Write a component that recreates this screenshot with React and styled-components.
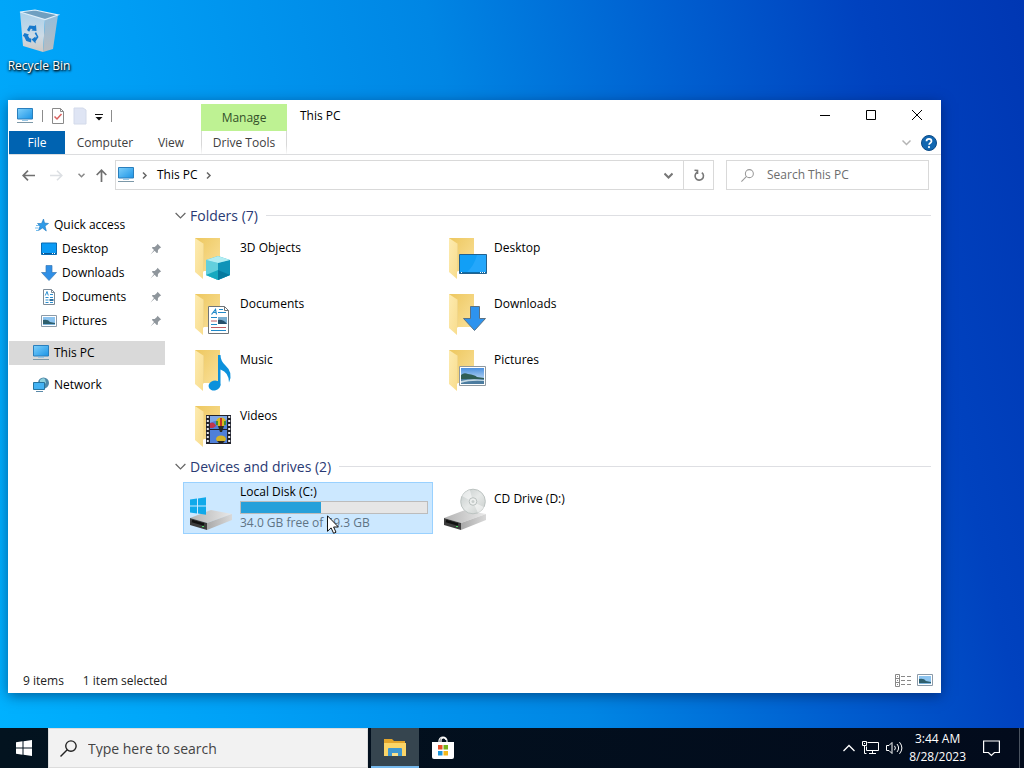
import styled, { createGlobalStyle } from "styled-components";

const folders = [
	{ name: "3D Objects", art: "cube" },
	{ name: "Desktop", art: "desktop" },
	{ name: "Documents", art: "document" },
	{ name: "Downloads", art: "download" },
	{ name: "Music", art: "music" },
	{ name: "Pictures", art: "picture" },
	{ name: "Videos", art: "video" },
];

const pinned = [
	{ name: "Desktop", Icon: DesktopIcon },
	{ name: "Downloads", Icon: DownloadIcon },
	{ name: "Documents", Icon: DocumentIcon },
	{ name: "Pictures", Icon: PictureIcon },
];

export default function App() {
	return (
		<Screen>
			<GlobalStyle />
			<Desktop>
				<Shortcut>
					<RecycleBinIcon />
					Recycle Bin
				</Shortcut>
				<Explorer />
			</Desktop>
			<Taskbar />
		</Screen>
	);
}

function Explorer() {
	return (
		<Window>
			<TitleBar>
				<QuickTools>
					<PcIcon />
					<Separator />
					<ToolButton aria-label="Properties">
						<svg width="14" height="18" viewBox="0 0 14 18">
							<path d="M1.500 1.500h8l3 3v12h-11z" fill="#fff" stroke="#8a8a8a" />
							<path d="M9.500 1.500v3h3" fill="none" stroke="#8a8a8a" />
							<path d="M3.500 9.500l2.500 2.500l4.500-5" fill="none" stroke="#d9605e" strokeWidth="1.500" />
						</svg>
					</ToolButton>
					<ToolButton aria-label="New folder">
						<svg width="14" height="18" viewBox="0 0 14 18">
							<path d="M1 1h9l3 2v14h-12z" fill="#dfe5f4" stroke="#d3daea" />
						</svg>
					</ToolButton>
					<ToolButton aria-label="Customize toolbar">
						<svg width="8" height="10" viewBox="0 0 8 10">
							<path d="M0 3.500h8" stroke="#111" />
							<path d="M.5 6h7l-3.500 3.500z" fill="#111" />
						</svg>
					</ToolButton>
					<Separator />
				</QuickTools>
				<ContextTab>Manage</ContextTab>
				<WindowTitle>This PC</WindowTitle>
				<CaptionButton aria-label="Minimize">
					<svg width="10" height="10" stroke="#000">
						<path d="M0 5.500h10" />
					</svg>
				</CaptionButton>
				<CaptionButton aria-label="Maximize">
					<svg width="10" height="10" stroke="#000" fill="none">
						<path d="M.5 .5h9v9h-9z" />
					</svg>
				</CaptionButton>
				<CaptionButton aria-label="Close">
					<svg width="10" height="10" stroke="#000">
						<path d="M0 0l10 10M10 0l-10 10" />
					</svg>
				</CaptionButton>
			</TitleBar>
			<Ribbon>
				<FileTab>File</FileTab>
				<RibbonTab $width="80px">Computer</RibbonTab>
				<RibbonTab $width="52px">View</RibbonTab>
				<DriveTab $width="86px">Drive Tools</DriveTab>
				<RibbonEnd>
					<IconButton aria-label="Expand ribbon">
						<Chevron dir="down" color="#b4b4b4" />
					</IconButton>
					<IconButton aria-label="Help">
						<svg width="16" height="16" viewBox="0 0 16 16">
							<circle cx="8" cy="8" r="7.500" fill="#1167b1" stroke="#0b4a86" />
							<path d="M5.500 6.200c0-3.200 5-3.200 5 0c0 1.800-2.400 1.700-2.400 3.600" fill="none" stroke="#fff" strokeWidth="1.700" />
							<circle cx="8" cy="12.100" r="1.100" fill="#fff" />
						</svg>
					</IconButton>
				</RibbonEnd>
			</Ribbon>
			<NavBar>
				<NavButtons>
					<IconButton aria-label="Back">
						<svg width="13" height="11" fill="none" stroke="#707070" strokeWidth="1.700">
							<path d="M13 5.500h-12M6 .7l-4.800 4.800l4.800 4.800" />
						</svg>
					</IconButton>
					<IconButton aria-label="Forward">
						<svg width="13" height="11" fill="none" stroke="#dcdfe3" strokeWidth="1.600">
							<path d="M0 5.500h12M7 .7l4.800 4.800l-4.800 4.800" />
						</svg>
					</IconButton>
					<RecentButton aria-label="Recent locations">
						<svg width="7" height="5" fill="none" stroke="#888" strokeWidth="1.500">
							<path d="M.5 .7l3 3l3-3" />
						</svg>
					</RecentButton>
					<IconButton aria-label="Up">
						<svg width="11" height="13" fill="none" stroke="#707070" strokeWidth="1.700">
							<path d="M5.500 13v-12M.7 6l4.800-4.800l4.800 4.800" />
						</svg>
					</IconButton>
				</NavButtons>
				<AddressBar>
					<Crumbs>
						<PcIcon />
						<Chevron dir="right" color="#666" />
						<a href="#this-pc">This PC</a>
						<Chevron dir="right" color="#666" />
					</Crumbs>
					<AddressButton aria-label="Previous locations">
						<Chevron dir="down" color="#777" bold />
					</AddressButton>
					<RefreshButton aria-label="Refresh">
						<svg width="12" height="13" viewBox="0 0 12 13" fill="none" stroke="#777" strokeWidth="1.600">
							<path d="M8.800 3.600a4.200 4.200 0 1 1-4.600-.3" />
							<path d="M1.500 1.200l3 .3v3.600" />
						</svg>
					</RefreshButton>
				</AddressBar>
				<SearchBox>
					<SearchIcon size={13} color="#999" />
					<input type="text" placeholder="Search This PC" aria-label="Search This PC" />
				</SearchBox>
			</NavBar>
			<Body>
				<Sidebar>
					<TreeItem href="#quick-access">
						<StarIcon />
						Quick access
					</TreeItem>
					{pinned.map(({ name, Icon }) => (
						<TreeItem key={name} href={"#" + name} $nested>
							<Icon />
							<span>{name}</span>
							<PinIcon />
						</TreeItem>
					))}
					<TreeItem href="#this-pc" $root $selected>
						<PcIcon />
						This PC
					</TreeItem>
					<TreeItem href="#network" $root>
						<NetworkIcon />
						Network
					</TreeItem>
				</Sidebar>
				<Content>
					<GroupHeader>
						<Chevron dir="down" color="#666" wide />
						Folders (7)
					</GroupHeader>
					<Tiles>
						{folders.map((f) => (
							<Tile key={f.name}>
								<FolderIcon art={f.art} />
								<TileText>{f.name}</TileText>
							</Tile>
						))}
					</Tiles>
					<GroupHeader>
						<Chevron dir="down" color="#666" wide />
						Devices and drives (2)
					</GroupHeader>
					<Tiles>
						<Tile $selected>
							<DriveIcon windows />
							<DriveText>
								<span>Local Disk (C:)</span>
								<Meter>
									<MeterFill style={{ width: "43%" }} />
								</Meter>
								<FreeSpace>34.0 GB free of 59.3 GB</FreeSpace>
							</DriveText>
							<Pointer width="12" height="19" viewBox="0 0 12 19">
								<path d="M.5 .8v15.500l3.600-3.400l2.500 5.400l2.400-1.100l-2.400-5.200h4.800z" fill="#fff" stroke="#111" />
							</Pointer>
						</Tile>
						<Tile>
							<DriveIcon />
							<TileText>CD Drive (D:)</TileText>
						</Tile>
					</Tiles>
				</Content>
			</Body>
			<StatusBar>
				<span>9 items</span>
				<span>1 item selected</span>
				<ViewButtons>
					<IconButton aria-label="Details view">
						<svg width="16" height="13" fill="none" stroke="#888">
							<path d="M.5 .5h4v12h-4zM.5 4.500h4M.5 8.500h4" />
							<path d="M2 2.500h1M2 6.500h1M2 10.500h1M6 2.500h4M12 2.500h4M6 6.500h4M12 6.500h4M6 10.500h4M12 10.500h4" />
						</svg>
					</IconButton>
					<IconButton aria-label="Large icons view">
						<PictureIcon />
					</IconButton>
				</ViewButtons>
			</StatusBar>
		</Window>
	);
}

function Taskbar() {
	return (
		<Bar>
			<TaskButton aria-label="Start">
				<svg width="16" height="16" viewBox="0 0 16 16" fill="#fff">
					<path d="M0 2.200l6.500-.9v6.200h-6.500zM7.500 1.200l8.500-1.200v7.500h-8.500zM0 8.500h6.500v6.200l-6.500-.9zM7.500 8.500h8.500v7.500l-8.500-1.200z" />
				</svg>
			</TaskButton>
			<TaskSearch>
				<SearchIcon size={17} color="#222" />
				<input type="text" placeholder="Type here to search" aria-label="Type here to search" />
			</TaskSearch>
			<TaskButton $active aria-label="File Explorer">
				<svg width="24" height="20" viewBox="0 0 24 20">
					<path d="M1 1h8l2 2h11v15h-21z" fill="#e3a52b" />
					<path d="M1 5h22v13h-22z" fill="#fbd567" />
					<path d="M5 18v-7q0-1 1-1h12q1 0 1 1v7h-4v-3h-6v3z" fill="#3f97cf" />
					<path d="M9 15h6v3h-6z" fill="#fbe08a" />
				</svg>
			</TaskButton>
			<TaskButton aria-label="Microsoft Store">
				<svg width="24" height="24" viewBox="0 0 24 24">
					<path d="M8 7v-2a4 4 0 0 1 8 0v2M10 7v-2a2 2 0 0 1 5-1" fill="none" stroke="#fff" strokeWidth="1.200" />
					<path d="M1 6h22v15q0 2-2 2h-18q-2 0-2-2z" fill="#fff" />
					<path d="M7 9h4.500v4.500h-4.500z" fill="#e6502a" />
					<path d="M12.500 9h4.500v4.500h-4.500z" fill="#79b31c" />
					<path d="M7 15h4.500v4.500h-4.500z" fill="#1c96dc" />
					<path d="M12.500 15h4.500v4.500h-4.500z" fill="#f3b71b" />
				</svg>
			</TaskButton>
			<Tray>
				<TrayIcons>
					<IconButton aria-label="Show hidden icons">
						<svg width="12" height="8" fill="none" stroke="#fff" strokeWidth="1.300">
							<path d="M.5 7l5.500-5.500l5.500 5.500" />
						</svg>
					</IconButton>
					<IconButton aria-label="Network status">
						<svg width="17" height="14" viewBox="0 0 17 14" fill="none" stroke="#fff">
							<path d="M5.500 1.500h11v8h-12v-4M10.500 9.500v3M7 12.500h7M.5 .5h4v4h-4zM2.500 4.500v8h2M2 2.500h1" />
						</svg>
					</IconButton>
					<IconButton aria-label="Volume">
						<svg width="18" height="14" viewBox="0 0 18 14" fill="none" stroke="#fff">
							<path d="M.5 4.500h2.500l3-3v11l-3-3h-2.500z" />
							<path d="M8.500 4.800q1.800 2.200 0 4.400M11 3q3.200 4 0 8M13.500 1.200q4.800 5.800 0 11.600" />
						</svg>
					</IconButton>
				</TrayIcons>
				<Clock>
					<span>3:44 AM</span>
					<span>8/28/2023</span>
				</Clock>
				<IconButton aria-label="Notifications">
					<svg width="17" height="17" viewBox="0 0 17 17" fill="none" stroke="#fff" strokeWidth="1.200">
						<path d="M.6 1h15.800v11.500h-5l-3 3l-3-3h-4.800z" />
					</svg>
				</IconButton>
				<ShowDesktop aria-label="Show desktop" />
			</Tray>
		</Bar>
	);
}

function Chevron({ dir, color, bold, wide }) {
	const size = wide ? 11 : 9;
	return (
		<svg width={size} height={size} viewBox="0 0 9 9" fill="none" stroke={color} strokeWidth={bold ? 2 : wide ? 1 : 1.5}>
			<path d={dir === "down" ? "M.5 2.500l4 4l4-4" : "M3 1.500l3 3l-3 3"} />
		</svg>
	);
}

function SearchIcon({ size, color }) {
	return (
		<svg width={size} height={size} viewBox="0 0 16 16" fill="none" stroke={color} strokeWidth="1.300">
			<circle cx="10.300" cy="5.700" r="4.900" />
			<path d="M6.800 9.200l-6.300 6.300" />
		</svg>
	);
}

function PcIcon() {
	return (
		<svg width="18" height="16" viewBox="0 0 18 16">
			<defs>
				<linearGradient id="pc" x1="0" y1="0" x2="1" y2="1">
					<stop offset="0" stopColor="#7fd0fb" />
					<stop offset="1" stopColor="#1b94e6" />
				</linearGradient>
			</defs>
			<path d="M1.500 .5h15v10.500h-15z" fill="url(#pc)" stroke="#2a7fbd" />
			<path d="M6 12.500h6" stroke="#9ac8e6" />
			<path d="M1 14.500h16" stroke="#7c98a8" />
		</svg>
	);
}

function StarIcon() {
	return (
		<svg width="16" height="16" viewBox="0 0 16 16">
			<path d="M9.500 2l1 4l4 .5l-3.500 2.500l1.300 5l-3.800-3l-4 2.500l1.500-4.500l-2.500-2.500h4z" fill="#2f9be8" stroke="#1b77bf" strokeWidth=".6" />
			<path d="M2 8.500h3M1 11h3.500M2 13.500h2" stroke="#73bdee" />
		</svg>
	);
}

function DesktopIcon() {
	return (
		<svg width="16" height="14" viewBox="0 0 16 14">
			<path d="M.5 1h15v11.500h-15z" fill="#0b9bf5" stroke="#0b6cb3" />
			<path d="M1 11.500h14" stroke="#0b5a98" />
			<path d="M2 11.500h1M11 11.500h1M13 11.500h1" stroke="#fff" />
		</svg>
	);
}

function DownloadIcon() {
	return (
		<svg width="16" height="16" viewBox="0 0 16 16">
			<path d="M5 .5h6v7h4.500l-7.500 8l-7.500-8h4.500z" fill="#2f8fe6" stroke="#3a78b4" strokeWidth=".7" />
		</svg>
	);
}

function DocumentIcon() {
	return (
		<svg width="16" height="16" viewBox="0 0 16 16">
			<path d="M2.500 .5h8l3 3v12h-11z" fill="#fff" stroke="#7d8a96" />
			<path d="M10.500 .5v3h3" fill="none" stroke="#7d8a96" />
			<path d="M4.300 6.500l1.700-4l1.300 4M9 5.500h3M4.500 8.500h3M9 8.500h3M4.500 11h3M4.500 13.500h3M9 13.500h3" fill="none" stroke="#2b8fd0" />
			<path d="M8.500 10h4v2h-4z" fill="#2d6f9e" />
		</svg>
	);
}

function PictureIcon() {
	return (
		<svg width="16" height="14" viewBox="0 0 16 14">
			<path d="M.5 1.500h15v11h-15z" fill="#fff" stroke="#8b9aa8" />
			<path d="M2 3h12v8h-12z" fill="#8cc4f0" />
			<path d="M2 6q5-1 7 2l5 1v2h-12z" fill="#2e5f6d" />
			<path d="M2 10h12v1h-12z" fill="#7db4dc" />
		</svg>
	);
}

function PinIcon() {
	return (
		<svg width="12" height="12" viewBox="0 0 12 12" fill="#8f969c">
			<path d="M7.500 .8l3.700 3.700l-1.200 .4l-2 2.200l-.2 2.600l-1.100 .2l-2.100-2.200l-4.100 3.700l3.500-4.300l-2-2l.4-1l2.300-.2l2.200-2z" />
		</svg>
	);
}

function NetworkIcon() {
	return (
		<svg width="18" height="16" viewBox="0 0 18 16">
			<circle cx="11.500" cy="6" r="5.500" fill="#4f88a8" />
			<path d="M8 3q3-3 5-1l1 4l-3 2l-3-2z" fill="#8ed0dc" />
			<path d="M1.500 5.500h11v7h-11z" fill="#43b2f3" stroke="#26749f" />
			<path d="M4 14.500h7" stroke="#5a89a8" />
		</svg>
	);
}

function RecycleBinIcon() {
	return (
		<svg width="48" height="48" viewBox="0 0 48 48">
			<defs>
				<linearGradient id="bin" x1="0" y1="0" x2="0" y2="1">
					<stop offset="0" stopColor="#a9d0ea" />
					<stop offset=".6" stopColor="#cddbe6" />
					<stop offset="1" stopColor="#cfc9c4" />
				</linearGradient>
				<linearGradient id="binSide" x1="0" y1="0" x2="0" y2="1">
					<stop offset="0" stopColor="#93bddb" />
					<stop offset="1" stopColor="#b9bcc0" />
				</linearGradient>
			</defs>
			<path d="M5 4l25 7l-2 33l-20-6z" fill="url(#bin)" />
			<path d="M30 11l13-4l-5 34l-10 3z" fill="url(#binSide)" />
			<path d="M5 4l15-2l23 5l-13 4.500z" fill="#6f9fc0" stroke="#dfeef8" strokeWidth="1.200" />
			<g fill="#1779cc">
				<path d="M12 22l2.500-4.500l5 .5l1.500-1l.5 6l-5-.5l1.200-1.500l-2-.2l-1.500 3z" />
				<path d="M21 24l2.500 5l-3 4.500l.2 2l-4.200-4l4-3l.2 1.700l1-1.700l-2-3z" />
				<path d="M9.500 25l4.500 1.500l-1 1.200l1.500 2.500l1.800 .4l-.2 4l-4.800-1.600l-2.200-4.500l-1.400-.5z" />
			</g>
		</svg>
	);
}

function FolderIcon({ art }) {
	return (
		<svg width="48" height="48" viewBox="0 0 48 48">
			<defs>
				<linearGradient id="back" x1="0" y1="0" x2="1" y2="1">
					<stop offset="0" stopColor="#edc75f" />
					<stop offset="1" stopColor="#fae19a" />
				</linearGradient>
				<linearGradient id="flap" x1="0" y1="0" x2="1" y2="1">
					<stop offset="0" stopColor="#fdebb0" />
					<stop offset="1" stopColor="#f8dc8c" />
				</linearGradient>
				<linearGradient id="sky" x1="0" y1="0" x2="0" y2="1">
					<stop offset="0" stopColor="#4b90df" />
					<stop offset="1" stopColor="#e2f1fb" />
				</linearGradient>
			</defs>
			<path d="M6 5h25v33h-25z" fill="url(#back)" />
			<path d="M6 5l9 6v27l-1 1v7l-8-7z" fill="url(#flap)" />
			<path d="M14.500 11v27" stroke="#efd489" strokeWidth=".8" />
			{folderArt[art]}
		</svg>
	);
}

const folderArt = {
	cube: (
		<>
			<path d="M17 27l12-4l12 4v15l-12 5l-12-5z" fill="#35b5cf" />
			<path d="M17 27l12 3v17l-12-5z" fill="#62cfdd" />
			<path d="M17 42l12-5v10z" fill="#16a9c0" />
			<path d="M29 30l12-3v15l-12 5z" fill="#0f93b8" />
			<path d="M29 37l12 5l-12 5z" fill="#057a9f" />
			<path d="M17 27l12-4l12 4l-12 3z" fill="#b2edf2" />
		</>
	),
	desktop: (
		<>
			<path d="M16.500 21.500h27v19h-27z" fill="#119ff6" stroke="#23618d" />
			<path d="M24 39q7-6 10-17h9v17z" fill="#24a7fb" />
			<path d="M17 39.500h26" stroke="#0c6ca8" />
			<path d="M18 39.500h1M37 39.500h1M39 39.500h1M41 39.500h1" stroke="#fff" />
		</>
	),
	document: (
		<>
			<path d="M19.500 17.500h16l4 4v23h-20z" fill="#fff" stroke="#6e7479" />
			<path d="M35.500 17.500v4h4" fill="none" stroke="#6e7479" />
			<path d="M22.500 25.500l4-5l1 5M24 23.500h3M30 20.500h4M29 23.500h8M22 28.500h6M22 35.500h6M22 41.500h15" fill="none" stroke="#2089c9" strokeWidth="1.200" />
			<path d="M22 32h6M22 38.500h15" stroke="#c15b62" />
			<path d="M29 28h9v7h-9z" fill="#79aed1" />
			<path d="M29 31q5-1 9 4h-9z" fill="#28506a" />
		</>
	),
	download: <path d="M27.500 17.500h9v12h6l-11 12l-11-12h7z" fill="#2e93ee" stroke="#5a7183" />,
	music: (
		<>
			<ellipse cx="25.500" cy="40.500" rx="6" ry="4.800" transform="rotate(-15 25.500 40.500)" fill="#0c91dc" />
			<path d="M29 10h2.500q0 6 5 10.500q8 7 3.500 17q0-10-8.500-13v16h-2.500z" fill="#0c91dc" />
		</>
	),
	picture: (
		<>
			<path d="M16.500 21.500h26v19h-26z" fill="#fff" stroke="#8e989f" />
			<path d="M18 23h23v16h-23z" fill="url(#sky)" />
			<path d="M18 30q3-3 7-1q7 1 9 3l7 1v2h-23z" fill="#2f5d55" />
			<path d="M18 34h23v5h-23z" fill="#4c7c9f" />
			<path d="M18 36q10-3 23-1v1q-14-1-23 2z" fill="#c5d9e4" />
		</>
	),
	video: (
		<>
			<path d="M17 14h25v29h-25z" fill="#20222c" />
			<path d="M18.800 15v27M40.200 15v27" stroke="#e8eaf0" strokeWidth="2" strokeDasharray="2 2" />
			<path d="M21 15h17v13h-17zM21 29h17v13h-17z" fill="#4f7fd8" />
			<path d="M21 15h17v4q-7-2-17 3z" fill="#7fa8e8" />
			<ellipse cx="32" cy="21" rx="5" ry="4.500" fill="#d9b91e" />
			<path d="M31 17h2v8h-2z" fill="#c73227" />
			<path d="M27 20h2v4h-2zM35 20h2v4h-2z" fill="#3f8f3a" />
			<path d="M29 25h6l-2 6h-2z" fill="#2d2b21" />
			<path d="M21 22q4-2 6 3l-3 2h-3z" fill="#c2354c" />
			<ellipse cx="32" cy="38" rx="5" ry="3.500" fill="#d4b32a" />
			<path d="M28 40h8l-2 2h-4z" fill="#24231f" />
			<path d="M21 28.500h17" stroke="#20222c" />
		</>
	),
};

function DriveIcon({ windows }) {
	return (
		<svg width="48" height="48" viewBox="0 0 48 48">
			<defs>
				<linearGradient id="lid" x1="0" y1="0" x2="1" y2="0">
					<stop offset="0" stopColor="#b3b3b3" />
					<stop offset="1" stopColor="#e9e9e9" />
				</linearGradient>
				<linearGradient id="side" x1="0" y1="0" x2="1" y2="0">
					<stop offset="0" stopColor="#a9a9a9" />
					<stop offset="1" stopColor="#d9d9d9" />
				</linearGradient>
				<linearGradient id="disc" x1="0" y1="0" x2="1" y2="1">
					<stop offset="0" stopColor="#c2c9c8" />
					<stop offset=".5" stopColor="#e6e9e8" />
					<stop offset="1" stopColor="#c6cbc9" />
				</linearGradient>
			</defs>
			<path d="M1 34l21-8l21 4l-25 9z" fill="url(#lid)" />
			<path d="M1 34l17 5v7l-17-5z" fill="#3d3d3d" />
			<path d="M18 39l25-9v6l-25 10z" fill="url(#side)" />
			<path d="M3 37l12 3.500" stroke="#111" strokeWidth="2.500" />
			<path d="M13 42.500h2" stroke="#4fdb63" strokeWidth="1.200" />
			{windows ? (
				<path d="M1 15.500l7-1v7h-7zM9 14.400l8-1.200v8.300h-8zM1 22.500h7v7l-7-1zM9 22.500h8v8.300l-8-1.200z" fill="#10a9ea" />
			) : (
				<>
					<circle cx="30" cy="17.500" r="12.300" fill="url(#disc)" stroke="#bcc3c1" />
					<path d="M30 18l-11-6q3-5 8-6zM30 18l11 5q-2 4-6 6z" fill="#fff" opacity=".5" />
					<circle cx="30" cy="17.500" r="3.800" fill="#eef0ef" stroke="#b9c0be" />
					<circle cx="30" cy="17.500" r="1.500" fill="#c8cecc" />
				</>
			)}
		</svg>
	);
}

const GlobalStyle = createGlobalStyle`
	* {
		box-sizing: border-box;
	}
	body {
		margin: 0;
		font-family: "Open Sans", "Noto Sans", sans-serif;
		font-size: 12px;
		line-height: 16px;
		color: #000;
	}
	button, input {
		font: inherit;
		color: inherit;
		padding: 0;
		border: none;
		background: none;
	}
	a {
		color: inherit;
		text-decoration: none;
	}
	svg {
		display: block;
		flex-shrink: 0;
	}
`;

const Screen = styled.div`
	min-height: 100vh;
	display: flex;
	flex-direction: column;
	background: linear-gradient(77deg, #00b2ff 0%, #00a0f6 22%, #0086e4 50%, #005fd0 70%, #0042bf 86%, #0037b3 100%);
`;

const Desktop = styled.main`
	flex: 1;
	display: flex;
	flex-direction: column;
	align-items: flex-start;
	padding: 8px 83px 35px 8px;
`;

const Shortcut = styled.button`
	width: 62px;
	height: 92px;
	display: flex;
	flex-direction: column;
	align-items: center;
	gap: 2px;
	color: white;
	white-space: nowrap;
	text-shadow: 1px 1px 2px #000, 0 1px 3px #000;
`;

const Window = styled.section`
	flex: 1;
	align-self: stretch;
	display: flex;
	flex-direction: column;
	padding: 1px 0 0 1px;
	background-color: white;
	box-shadow: 0 3px 12px rgba(0, 20, 60, 0.5);
`;

const TitleBar = styled.header`
	height: 30px;
	display: flex;
	align-items: center;
	padding-right: 1px;
`;

const QuickTools = styled.div`
	width: 192px;
	display: flex;
	align-items: center;
	gap: 8px;
	padding-left: 7px;
`;

const Separator = styled.span`
	width: 1px;
	height: 12px;
	background-color: #8c8c8c;
`;

const ToolButton = styled.button`
	display: flex;
	align-items: center;
`;

const ContextTab = styled.button`
	width: 86px;
	height: 27px;
	align-self: flex-end;
	background-color: #bef293;
	color: #34502a;
`;

const WindowTitle = styled.span`
	flex: 1;
	padding-left: 13px;
`;

const CaptionButton = styled.button`
	width: 46px;
	height: 28px;
	align-self: flex-start;
	display: flex;
	align-items: center;
	justify-content: center;
`;

const Ribbon = styled.nav`
	height: 24px;
	display: flex;
	border-bottom: 1px solid #dcdddf;
`;

const RibbonTab = styled.button`
	width: ${(props) => props.$width};
	color: #404040;
`;

const FileTab = styled(RibbonTab)`
	width: 56px;
	background-color: #0063b1;
	color: white;
`;

const DriveTab = styled(RibbonTab)`
	margin-left: 4px;
	border: 1px solid;
	border-width: 0 1px;
	border-image: linear-gradient(#d8d8d8, #d8d8d8 60%, transparent) 1;
`;

const RibbonEnd = styled.div`
	margin-left: auto;
	display: flex;
	align-items: center;
	gap: 10px;
	padding-right: 4px;
`;

const IconButton = styled.button`
	display: flex;
	align-items: center;
	justify-content: center;
`;

const RecentButton = styled(IconButton)`
	margin: 0 -4px 0 0;
`;

const NavBar = styled.div`
	height: 40px;
	display: flex;
	align-items: center;
	padding-right: 12px;
`;

const NavButtons = styled.div`
	width: 106px;
	display: flex;
	align-items: center;
	justify-content: space-between;
	padding: 0 8px 0 13px;
`;

const AddressBar = styled.div`
	flex: 1;
	height: 30px;
	display: flex;
	border: 1px solid #d9d9d9;
`;

const Crumbs = styled.div`
	flex: 1;
	display: flex;
	align-items: center;
	gap: 5px;
	padding-left: 1px;
	a {
		padding: 0 1px 0 3px;
	}
`;

const AddressButton = styled.button`
	width: 30px;
	display: flex;
	align-items: center;
	justify-content: center;
`;

const RefreshButton = styled(AddressButton)`
	border-left: 1px solid #d9d9d9;
`;

const SearchBox = styled.label`
	width: 203px;
	height: 30px;
	margin-left: 12px;
	display: flex;
	align-items: center;
	gap: 13px;
	padding-left: 14px;
	border: 1px solid #d9d9d9;
	input {
		flex: 1;
		min-width: 0;
		outline: none;
	}
	input::placeholder {
		color: #6d6d6d;
		opacity: 1;
	}
`;

const Body = styled.div`
	flex: 1;
	display: flex;
`;

const Sidebar = styled.aside`
	width: 156px;
	display: flex;
	flex-direction: column;
	padding-top: 18px;
`;

const TreeItem = styled.a`
	height: 24px;
	display: flex;
	align-items: center;
	gap: ${(props) => (props.$nested ? "5px" : "4px")};
	margin-top: ${(props) => (props.$root ? "8px" : "0")};
	padding: 0 3px 0 ${(props) => (props.$nested ? "32px" : props.$root ? "23px" : "25px")};
	background-color: ${(props) => (props.$selected ? "#d9d9d9" : "transparent")};
	span {
		flex: 1;
	}
`;

const Content = styled.div`
	flex: 1;
	padding: 5px 10px 0;
`;

const GroupHeader = styled.h2`
	height: 31px;
	margin: 0;
	display: flex;
	align-items: center;
	gap: 4px;
	font-size: 14px;
	font-weight: 400;
	color: #2a3a74;
	&::after {
		content: "";
		flex: 1;
		height: 1px;
		margin-left: 4px;
		background-color: #dedfe3;
	}
`;

const Tiles = styled.div`
	display: grid;
	grid-template-columns: repeat(2, 250px);
	gap: 4px;
	padding-left: 8px;
`;

const Tile = styled.div`
	position: relative;
	height: 52px;
	display: flex;
	gap: 3px;
	padding: 1px 4px 1px 5px;
	border: 1px solid ${(props) => (props.$selected ? "#99d1ff" : "transparent")};
	background-color: ${(props) => (props.$selected ? "#cce8ff" : "transparent")};
`;

const TileText = styled.span`
	padding-top: 7px;
`;

const DriveText = styled.div`
	flex: 1;
	display: flex;
	flex-direction: column;
	gap: 1px;
`;

const Meter = styled.div`
	height: 13px;
	border: 1px solid #bcbcbc;
	background-color: #e6e6e6;
`;

const MeterFill = styled.div`
	height: 100%;
	background-color: #26a0da;
`;

const FreeSpace = styled.span`
	color: #5f7485;
`;

const Pointer = styled.svg`
	position: absolute;
	left: 143px;
	top: 32px;
`;

const StatusBar = styled.footer`
	height: 26px;
	display: flex;
	align-items: center;
	gap: 19px;
	padding: 2px 8px 0 14px;
	color: #222;
`;

const ViewButtons = styled.div`
	margin-left: auto;
	display: flex;
	align-items: center;
	gap: 6px;
	padding-bottom: 2px;
`;

const Bar = styled.footer`
	height: 40px;
	display: flex;
	background: linear-gradient(90deg, #03131f, #020b1c);
	color: white;
`;

const TaskButton = styled.button`
	width: 48px;
	display: flex;
	align-items: center;
	justify-content: center;
	background-color: ${(props) => (props.$active ? "#36454f" : "transparent")};
	border-bottom: 2px solid ${(props) => (props.$active ? "#76b9ed" : "transparent")};
	border-top: 2px solid transparent;
`;

const TaskSearch = styled.label`
	width: 320px;
	margin-right: 3px;
	display: flex;
	align-items: center;
	gap: 11px;
	padding: 1px 0 0 11px;
	background-color: #f2f2f2;
	border: 1px solid #dcdcdc;
	font-size: 14px;
	input {
		flex: 1;
		outline: none;
	}
	input::placeholder {
		color: #444;
		opacity: 1;
	}
`;

const Tray = styled.div`
	margin-left: auto;
	display: flex;
	align-items: center;
	gap: 5px;
`;

const TrayIcons = styled.div`
	display: flex;
	align-items: center;
	gap: 7px;
`;

const Clock = styled.div`
	display: flex;
	flex-direction: column;
	align-items: center;
	line-height: 18px;
	margin-right: 12px;
`;

const ShowDesktop = styled.button`
	width: 5px;
	align-self: stretch;
	margin-left: 14px;
	border-left: 1px solid #4a5360;
`;
